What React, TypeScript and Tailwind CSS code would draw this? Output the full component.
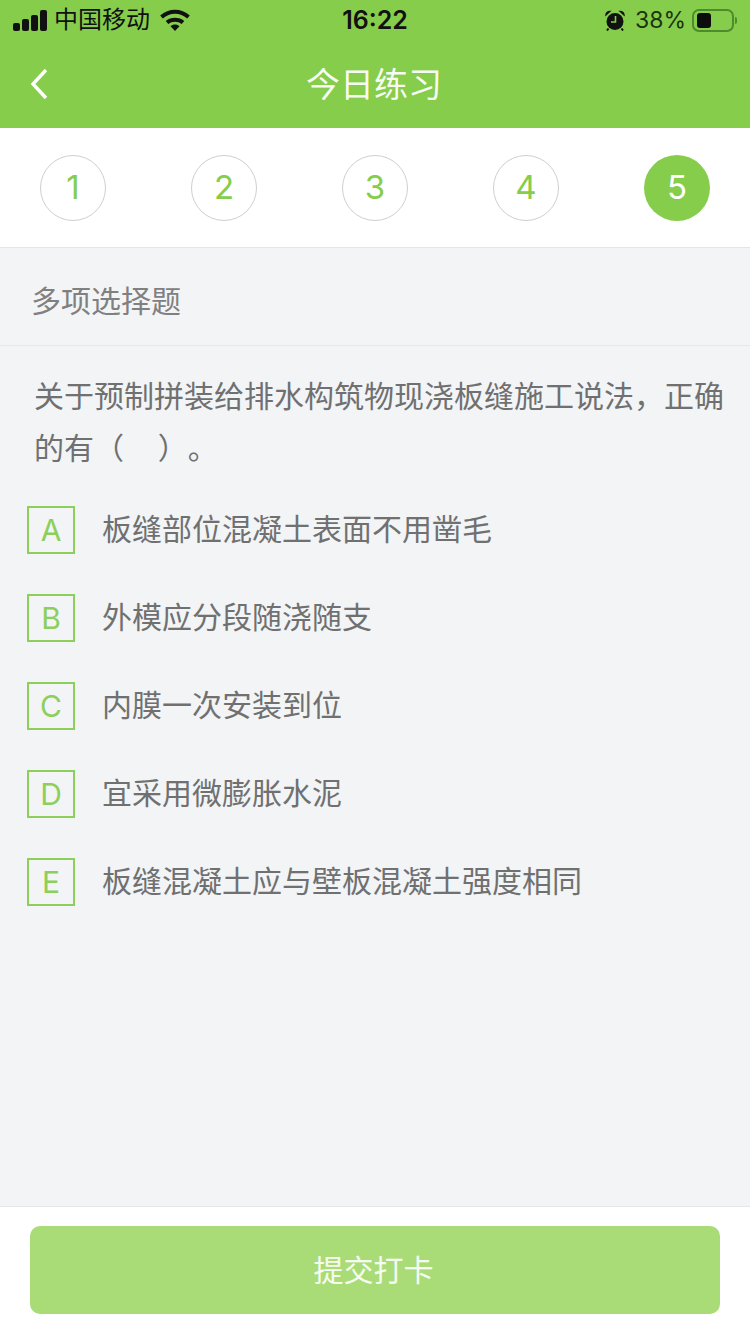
const FONT = 'font-["Inter","Noto_Sans_CJK_SC",sans-serif]';

const steps = [1, 2, 3, 4, 5];

const options = [
  { key: 'A', text: '板缝部位混凝土表面不用凿毛' },
  { key: 'B', text: '外模应分段随浇随支' },
  { key: 'C', text: '内膜一次安装到位' },
  { key: 'D', text: '宜采用微膨胀水泥' },
  { key: 'E', text: '板缝混凝土应与壁板混凝土强度相同' },
];

function Signal() {
  return (
    <svg width="34" height="21" viewBox="0 0 34 21" fill="#111">
      <rect x="0" y="13" width="7" height="8" rx="2" />
      <rect x="9" y="9" width="7" height="12" rx="2" />
      <rect x="18" y="5" width="7" height="16" rx="2" />
      <rect x="27" y="0" width="7" height="21" rx="2" />
    </svg>
  );
}

function Wifi() {
  return (
    <svg width="30" height="22" viewBox="0 0 30 22" fill="none" stroke="#111" strokeWidth="4">
      <path d="M1.5 8C9.5 1 20.5 1 28.5 8" />
      <path d="M7 13.5C11.5 9.8 18.5 9.8 23 13.5" />
      <path d="M10.5 17.2 15 22l4.5-4.8C17 14.8 13 14.8 10.5 17.2Z" fill="#111" stroke="none" />
    </svg>
  );
}

function Alarm() {
  return (
    <svg width="20" height="21" viewBox="0 0 20 21">
      <circle cx="10" cy="11.5" r="8.5" fill="#111" />
      <path d="M0.3 6.5C-0.3 2.5 2.5 0 6.5 0.8Z M19.7 6.5C20.3 2.5 17.5 0 13.5 0.8Z" fill="#111" />
      <path d="M3.5 18.5 2 20.5 M16.5 18.5 18 20.5" stroke="#111" strokeWidth="2" />
      <path d="M10.5 6V12H6" fill="none" stroke="#86cd4c" strokeWidth="1.6" />
    </svg>
  );
}

function Battery() {
  return (
    <div className="flex items-center gap-[1px]">
      <div className="w-[42px] h-[23px] rounded-[7px] border-2 border-[#4f8a2d] p-[2px] pl-[3px]">
        <div className="w-[14px] h-full rounded-[3px] bg-[#0c0c0c]" />
      </div>
      <div className="w-[2px] h-[7px] rounded-r-sm bg-[#4f8a2d]" />
    </div>
  );
}

export default function App() {
  return (
    <div className={`w-[750px] h-[1334px] flex flex-col bg-[#f2f4f6] ${FONT}`}>
      {/* Header */}
      <div className="h-[128px] shrink-0 bg-[#86cd4c] flex flex-col">
        <div className="h-[40px] pl-[13px] pr-[13px] flex items-center justify-between text-[#111]">
          <div className="flex-1 flex items-center gap-[7px]">
            <Signal />
            <span className="text-[24px] leading-none">中国移动</span>
            <span className="ml-[3px]"><Wifi /></span>
          </div>
          <span className="text-[25px] leading-none font-semibold">16:22</span>
          <div className="flex-1 flex items-center justify-end gap-[10px]">
            <Alarm />
            <div className="flex items-center gap-[6px]">
              <span className="text-[23px] leading-none text-[#1c3310]">38%</span>
              <Battery />
            </div>
          </div>
        </div>
        <div className="flex-1 relative flex items-center justify-center pt-[2px] pr-[2px]">
          <svg className="absolute left-[30px] top-[28px]" width="18" height="32" viewBox="0 0 18 32" fill="none" stroke="#fff" strokeWidth="3.4">
            <path d="M16 2 3 16l13 14" />
          </svg>
          <span className="text-[34px] leading-none text-white/95">今日练习</span>
        </div>
      </div>

      {/* Steps */}
      <div className="h-[120px] shrink-0 bg-white border-b border-[#e6e6e6] px-[40px] flex items-center justify-between">
        {steps.map((n) => (
          <div
            key={n}
            className={`size-[66px] rounded-full flex items-center justify-center text-[33px] ${
              n === 5 ? 'bg-[#86cd4c] text-white' : 'border border-[#cfcfcf] text-[#86cd4c]'
            }`}
          >
            {n}
          </div>
        ))}
      </div>

      {/* Question type */}
      <div className="h-[98px] shrink-0 border-b border-[#e6e8ea] pl-[31px] pt-[10px] flex items-center text-[30px] text-[#808080]">
        多项选择题
      </div>

      {/* Question */}
      <div className="pt-[24px] pl-[34px] pr-[20px] text-[30px] leading-[52px] text-[#707070] [text-spacing-trim:space-all]">
        关于预制拼装给排水构筑物现浇板缝施工说法，正确的有（&nbsp;&nbsp;&nbsp;&nbsp;）。
      </div>

      {/* Options */}
      <div className="pt-[32px] pl-[27px] flex flex-col gap-[40px]">
        {options.map((opt) => (
          <div key={opt.key} className="flex items-center gap-[27px] h-[48px]">
            <div className="size-[48px] border-2 border-[#8ccf5a] flex items-center justify-center text-[30px] text-[#8ccf5a] pt-[1px]">
              {opt.key}
            </div>
            <span className="text-[30px] leading-none text-[#707070] -mt-[2px]">{opt.text}</span>
          </div>
        ))}
      </div>

      {/* Submit */}
      <div className="mt-auto h-[128px] shrink-0 bg-white border-t border-[#e6e6e6] px-[30px] pt-[19px]">
        <div className="h-[88px] rounded-[10px] bg-[#a9dc77] flex items-center justify-center text-[30px] text-white/90 pr-[3px]">
          提交打卡
        </div>
      </div>
    </div>
  );
}
